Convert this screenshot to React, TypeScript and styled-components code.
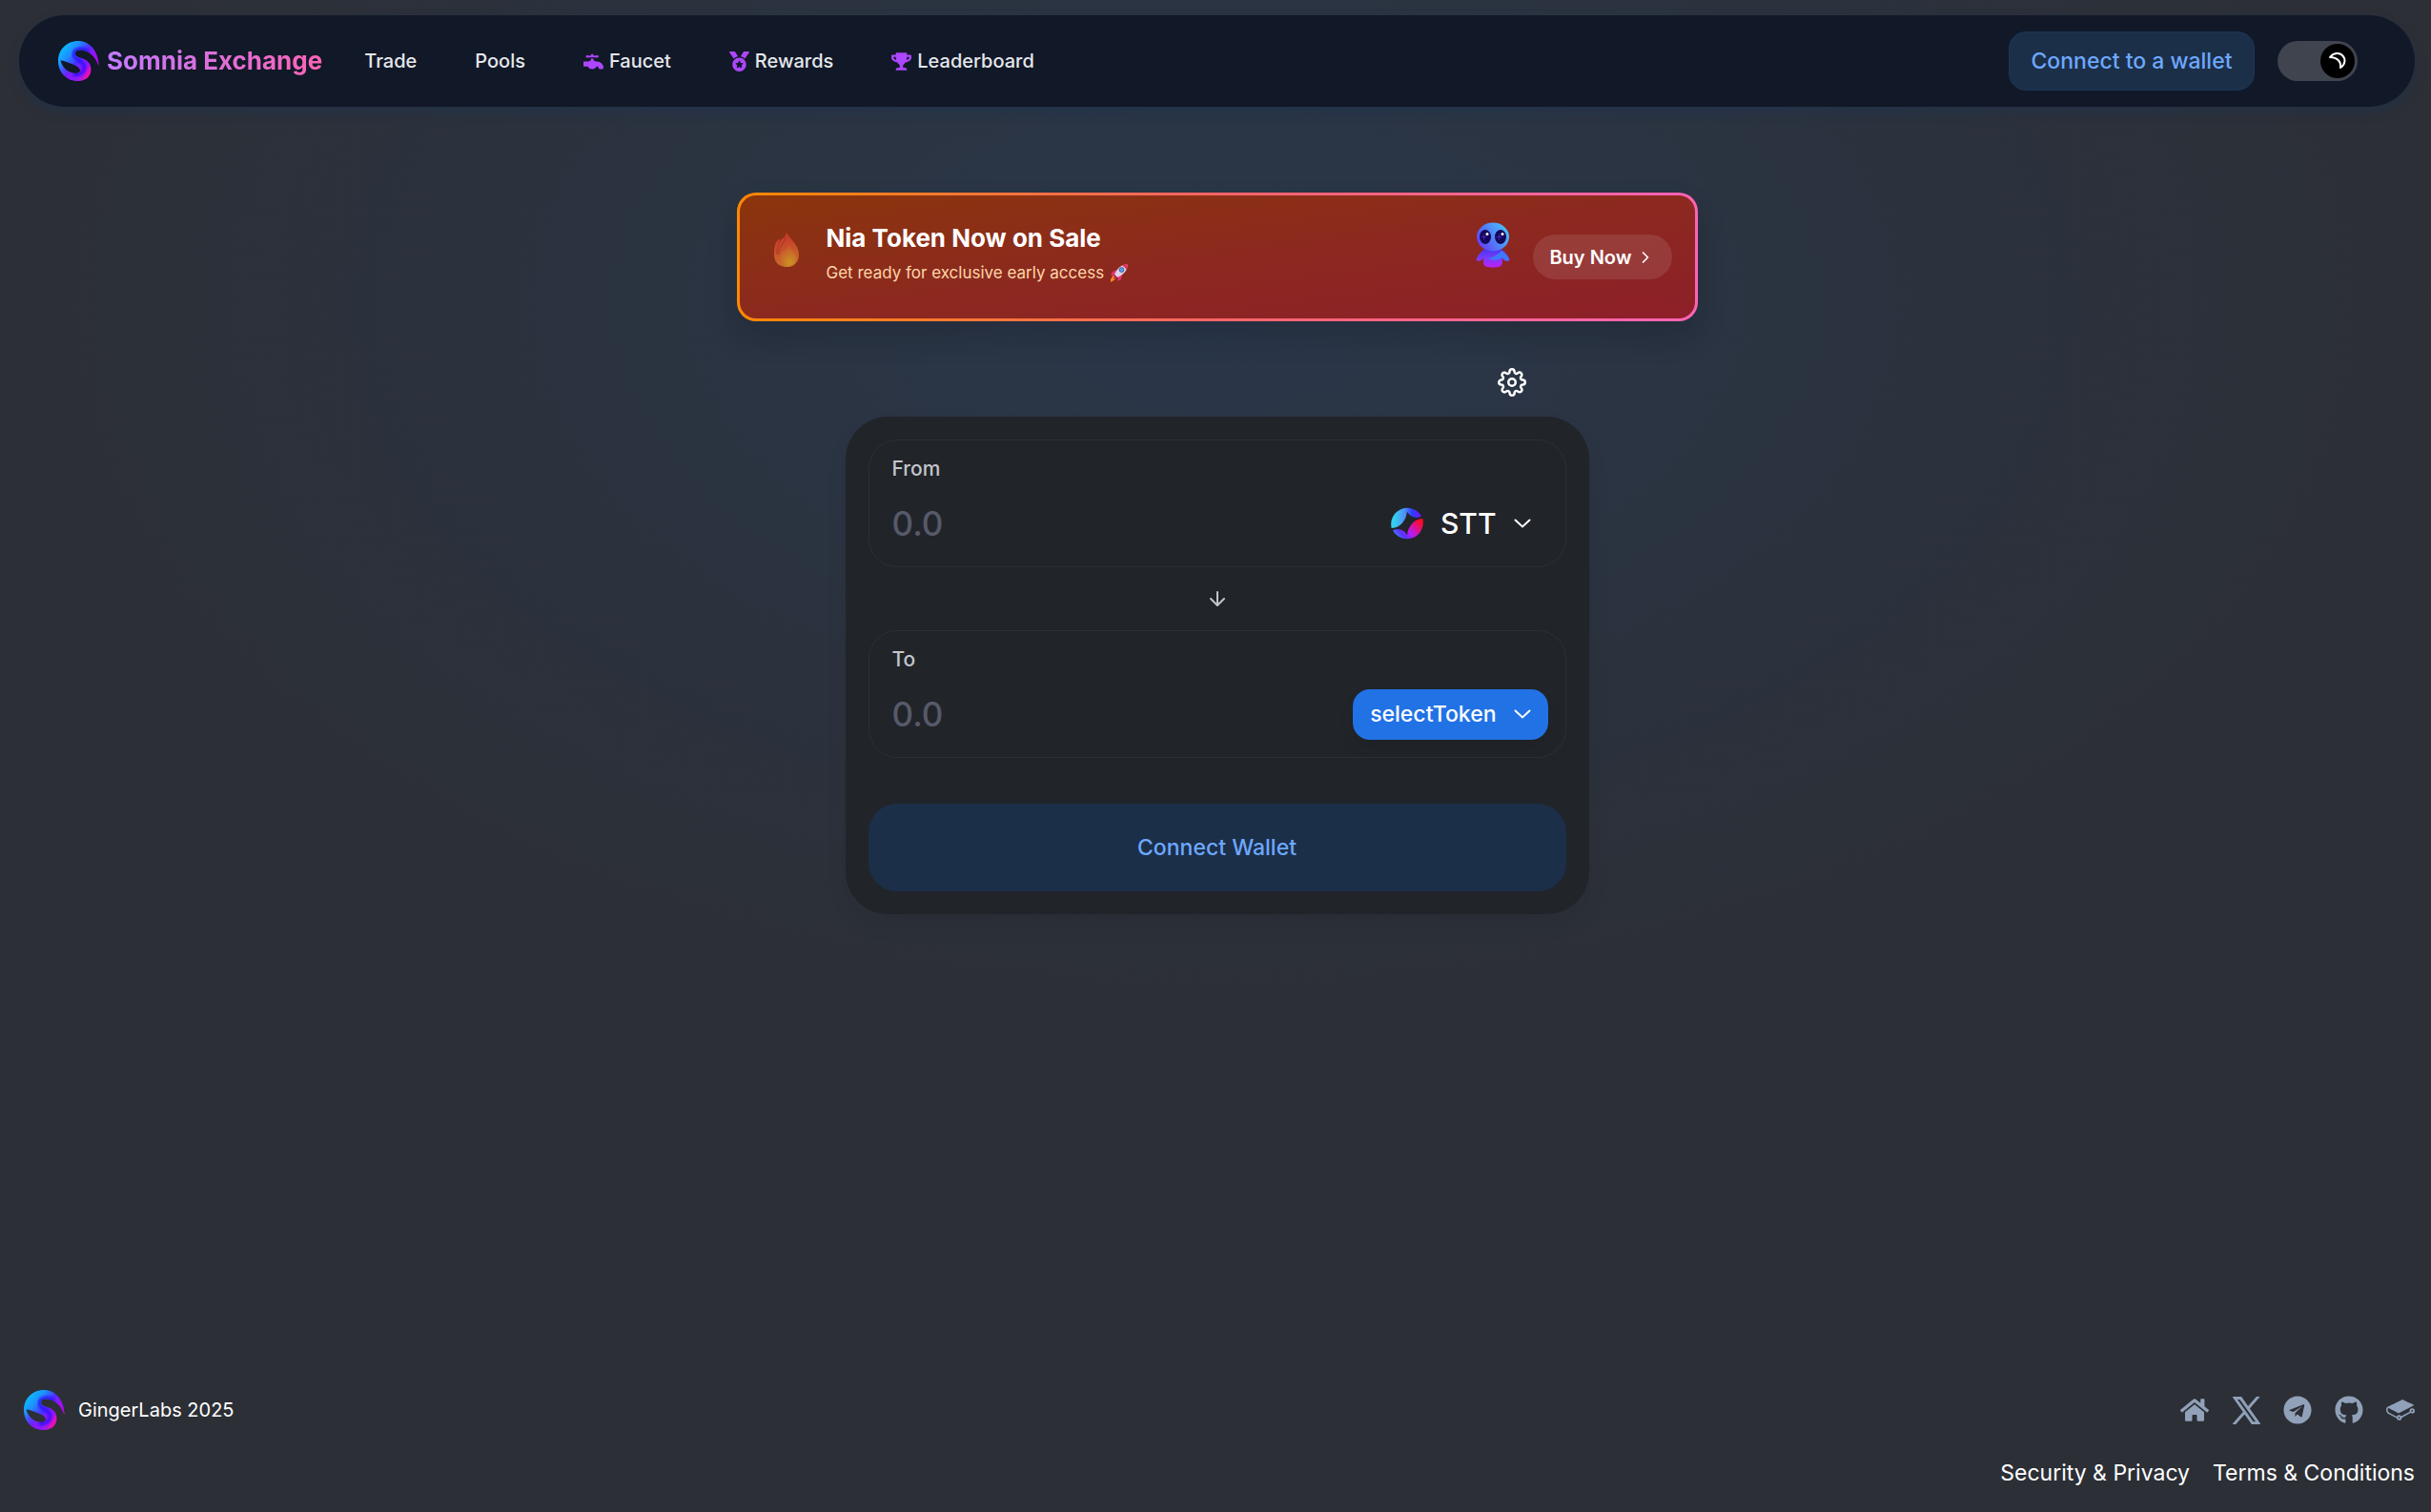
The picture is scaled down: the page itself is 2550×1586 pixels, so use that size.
import React, { useState } from 'react';
import styled, { createGlobalStyle, css } from 'styled-components';
import { FaFaucet, FaGithub, FaHome, FaMedal, FaTelegram, FaTrophy } from 'react-icons/fa';
import { FiSettings } from 'react-icons/fi';
import { ArrowDown, ChevronRight } from 'lucide-react';

const GlobalStyle = createGlobalStyle`
  *, *::before, *::after { box-sizing: border-box; }
  body { margin: 0; background: #2c2f36; color: #fff; font-family: Inter, "Noto Sans", sans-serif; }
  button, input { font-family: inherit; }
`;

const Page = styled.div`
  min-height: 100vh;
  display: flex;
  flex-direction: column;
  padding: 16px 17px 23px 20px;
  background: radial-gradient(50% 48% at 50% 20%, #2a374a 0%, #2c2f36 100%) #2c2f36;
`;

const Nav = styled.nav`
  display: flex;
  align-items: center;
  height: 96px;
  padding: 0 60px 0 40px;
  border-radius: 48px;
  background: #111827;
  box-shadow: 0 6px 12px rgba(25, 50, 85, 0.4);
`;

const Brand = styled.a`
  display: flex;
  align-items: center;
  gap: 8px;
  text-decoration: none;
`;

const BrandName = styled.span`
  font-size: 26px;
  font-weight: 700;
  line-height: 36px;
  background: linear-gradient(90deg, #c27aff, #fb64b6);
  background-clip: text;
  -webkit-background-clip: text;
  color: transparent;
`;

const NavLinks = styled.div`
  display: flex;
  flex: 1;
  gap: 61px;
  padding-left: 44px;
`;

const NavLink = styled.a`
  display: flex;
  align-items: center;
  gap: 6px;
  color: #e5e7eb;
  font-size: 20px;
  font-weight: 500;
  line-height: 28px;
  text-decoration: none;
  svg { color: #ad46ff; }
`;

const blueSoft = css`
  background: #1c2f48;
  color: #6da8ff;
  font-size: 23px;
  font-weight: 500;
  padding: 0;
  cursor: pointer;
`;

const WalletButton = styled.button`
  ${blueSoft}
  width: 258px;
  height: 62px;
  margin-right: 24px;
  border: 1px solid #1b365a;
  border-radius: 18px;
`;

const Toggle = styled.label`
  display: flex;
  justify-content: flex-end;
  width: 84px;
  height: 42px;
  padding: 3px;
  border-radius: 21px;
  background: #40444f;
  cursor: pointer;
  &:has(input:not(:checked)) { justify-content: flex-start; }
`;

const HiddenCheck = styled.input`
  position: absolute;
  opacity: 0;
`;

const Knob = styled.span`
  display: grid;
  place-items: center;
  width: 36px;
  height: 36px;
  border-radius: 50%;
  background: #000;
`;

const Main = styled.main`
  flex: 1;
  display: flex;
  flex-direction: column;
  align-items: center;
  padding-top: 90px;
`;

const Banner = styled.section`
  display: flex;
  align-items: center;
  width: 100%;
  max-width: 1008px;
  height: 135px;
  padding: 0 24px 0 35px;
  border: 3px solid transparent;
  border-radius: 20px;
  background:
    linear-gradient(to bottom right, #8b350c, #8c291f 50%, #8d1f29) padding-box,
    linear-gradient(90deg, #ff8904, #ff6467 50%, #fb64b6) border-box;
  box-shadow: 0 16px 30px rgba(10, 15, 25, 0.2);
`;

const FlameWrap = styled.span`
  display: flex;
  margin-bottom: 16px;
`;

const BannerText = styled.div`
  flex: 1;
  margin: 0 0 8px 28px;
`;

const BannerTitle = styled.h2`
  margin: 0;
  font-size: 26px;
  font-weight: 700;
  line-height: 40px;
`;

const BannerNote = styled.p`
  display: flex;
  align-items: center;
  gap: 6px;
  margin: 0;
  color: #ffd6a8;
  font-size: 17px;
  line-height: 32px;
`;

const MascotWrap = styled.span`
  display: flex;
  margin: 0 24px 26px 0;
`;

const BuyButton = styled.button`
  display: flex;
  align-items: center;
  gap: 4px;
  height: 47px;
  padding: 0 18px 0 17px;
  border: 0;
  border-radius: 24px;
  background: rgba(255, 255, 255, 0.1);
  color: #fff;
  font-size: 20px;
  font-weight: 600;
  cursor: pointer;
`;

const SwapArea = styled.div`
  display: flex;
  flex-direction: column;
  width: 100%;
  max-width: 780px;
`;

const SettingsButton = styled.button`
  display: flex;
  align-self: flex-end;
  margin: 49px 66px 21px 0;
  padding: 0;
  border: 0;
  background: none;
  color: #fff;
  cursor: pointer;
`;

const Card = styled.section`
  display: flex;
  flex-direction: column;
  padding: 24px;
  border-radius: 45px;
  background: #212429;
  box-shadow: 0 12px 24px rgba(0, 0, 0, 0.06);
`;

const Field = styled.div`
  display: flex;
  flex-direction: column;
  height: 134px;
  padding: 18px 18px 18px 24px;
  border: 1px solid #2c2f36;
  border-radius: 30px;
`;

const FieldLabel = styled.label`
  color: #c3c5cb;
  font-size: 21px;
  font-weight: 500;
  line-height: 24px;
`;

const FieldRow = styled.div`
  display: flex;
  align-items: center;
  justify-content: space-between;
  margin-top: 18px;
  height: 54px;
`;

const Amount = styled.input`
  flex: 1;
  min-width: 0;
  padding: 0;
  border: 0;
  outline: 0;
  background: none;
  color: #fff;
  font-size: 35px;
  font-weight: 500;
  &::placeholder { color: #565a69; opacity: 1; }
`;

const TokenButton = styled.button<{ $filled?: boolean }>`
  display: flex;
  align-items: center;
  gap: 18px;
  height: 53px;
  padding: 0 18px;
  border: 0;
  border-radius: 18px;
  background: ${(p) => (p.$filled ? '#2172e5' : 'transparent')};
  box-shadow: ${(p) => (p.$filled ? '0 9px 15px rgba(0, 0, 0, 0.08)' : 'none')};
  color: #fff;
  font-size: ${(p) => (p.$filled ? '23px' : '30px')};
  font-weight: 500;
  cursor: pointer;
`;

const SwapArrow = styled.div`
  display: grid;
  place-items: center;
  height: 66px;
  color: #c3c5cb;
`;

const ConnectButton = styled.button`
  ${blueSoft}
  height: 92px;
  margin-top: 48px;
  border: 0;
  border-radius: 30px;
`;

const Footer = styled.footer`
  display: flex;
  flex-direction: column;
  padding-left: 4px;
`;

const FooterRow = styled.div<{ $end?: boolean }>`
  display: flex;
  align-items: center;
  justify-content: ${(p) => (p.$end ? 'flex-end' : 'space-between')};
  gap: 24px;
  margin-top: ${(p) => (p.$end ? '26px' : '0')};
`;

const Company = styled.div`
  display: flex;
  align-items: center;
  gap: 14px;
  font-size: 20px;
  line-height: 42px;
`;

const Socials = styled.div`
  display: flex;
  gap: 24px;
`;

const SocialLink = styled.a`
  display: grid;
  place-items: center;
  width: 30px;
  height: 30px;
  color: #90a1b9;
`;

const LegalLink = styled.a`
  color: #fff;
  font-size: 23px;
  line-height: 36px;
  text-decoration: none;
`;

const logoShape =
  'M42.500 26C42 10 33 0 21 0 9 0 0 9 0 21s9 21 21 21c8 0 13.500-5 13.500-12 0-6-3.500-9.500-8.500-11.500-4-1.500-8-2-8-5.500 0-3 3-4 7-3.500C33 10.500 39.500 17 42.500 26zM2.500 20.500C6 20.500 10 22.500 14 24c4 1.500 9 3.500 9 7 0 3-4 3.500-8 2.500C9 32 4 27 2.500 20.500z';

function Logo({ id }: { id: string }) {
  return (
    <svg width="44" height="44" viewBox="-1 -1 44 44" aria-hidden="true">
      <defs>
        <linearGradient id={`${id}base`} gradientUnits="userSpaceOnUse" x1="3" y1="12" x2="33" y2="37">
          <stop offset="0" stopColor="#0fb2ff" />
          <stop offset=".22" stopColor="#1f8dff" />
          <stop offset=".5" stopColor="#4a30ff" />
          <stop offset=".72" stopColor="#9a12ff" />
          <stop offset="1" stopColor="#ff10a0" />
        </linearGradient>
        <radialGradient id={`${id}right`} gradientUnits="userSpaceOnUse" cx="42" cy="20" r="22">
          <stop offset="0" stopColor="#b000ff" />
          <stop offset="1" stopColor="#6a2cff" stopOpacity="0" />
        </radialGradient>
        <radialGradient id={`${id}left`} gradientUnits="userSpaceOnUse" cx="12" cy="39" r="18">
          <stop offset="0" stopColor="#9016ff" />
          <stop offset="1" stopColor="#5a30ff" stopOpacity="0" />
        </radialGradient>
        <filter id={`${id}soft`}><feGaussianBlur stdDeviation="1.2" /></filter>
        <clipPath id={`${id}clip`}><path d={logoShape} clipRule="evenodd" /></clipPath>
      </defs>
      <g clipPath={`url(#${id}clip)`}>
        <rect width="43" height="43" fill={`url(#${id}base)`} />
        <rect x="22" width="21" height="27" fill={`url(#${id}right)`} />
        <rect y="21" width="30" height="22" fill={`url(#${id}left)`} />
        <path
          d="M32 11C25 7 17 8 16.500 13.500 16 20 25 20 27 25c2 6-2 11-11 10"
          fill="none"
          stroke="#2d0cff"
          strokeWidth="4"
          opacity=".8"
          filter={`url(#${id}soft)`}
        />
      </g>
    </svg>
  );
}

function Flame() {
  return (
    <svg width="28" height="38" viewBox="0 0 28 38" aria-hidden="true">
      <defs>
        <linearGradient id="flame" x1=".4" y1="0" x2=".6" y2="1">
          <stop offset="0" stopColor="#c5342a" />
          <stop offset=".6" stopColor="#c9592c" />
          <stop offset="1" stopColor="#c96f28" />
        </linearGradient>
        <radialGradient id="flameCore" cx=".65" cy=".8" r=".7">
          <stop offset="0" stopColor="#c99422" />
          <stop offset="1" stopColor="#c95a2c" />
        </radialGradient>
      </defs>
      <path d="M14 1c3 6 13 13 13 23 0 8-5 13-13 13C6 37 1 32 1 24 1 17 2 10 6 8l2 1C10 7 13 5 14 1z" fill="url(#flame)" />
      <path d="M7 9c0 5-4 9-3 15M13 5c-1 8-8 11-7 19" fill="none" stroke="#a73722" />
      <path d="M16 14c3 4 8 8 8 14 0 6-4 9-9 9-6 0-9-4-9-9 0-7 8-7 10-14z" fill="url(#flameCore)" />
    </svg>
  );
}

function Rocket() {
  return (
    <svg width="20" height="20" viewBox="0 0 20 20" aria-hidden="true">
      <path d="M4 12l-3 5v3l5-3z" fill="#f58a1f" />
      <path d="M8 7L3 9l-2 4 5-1zM13 12l-1 5-4 2 1-6z" fill="#e5326e" />
      <path d="M18.500 1.500C13 1 8 5 5 12l3 3c7-3 11-8 10.500-13.500z" fill="#dcd3e8" />
      <path d="M19 1l-6 1 5 5z" fill="#e8345f" />
      <path d="M5 12l3 3-4 2z" fill="#c22563" />
      <circle cx="12.500" cy="7" r="2.400" fill="#4aa3ee" stroke="#5a5a8c" />
    </svg>
  );
}

function Mascot() {
  return (
    <svg width="36" height="48" viewBox="0 0 36 48" aria-hidden="true">
      <defs>
        <linearGradient id="head" x1="0" y1=".8" x2="1" y2=".2">
          <stop offset="0" stopColor="#6a35f5" />
          <stop offset=".5" stopColor="#4f83f8" />
          <stop offset="1" stopColor="#4cc3ff" />
        </linearGradient>
        <linearGradient id="body" x1="0" y1="0" x2="0" y2="1">
          <stop offset="0" stopColor="#4636f0" />
          <stop offset=".5" stopColor="#7a3bfa" />
          <stop offset="1" stopColor="#bd1ff5" />
        </linearGradient>
      </defs>
      <path d="M10 28C5 31 1 36 .5 40c2 1.500 5 1 7.500-2v5c1 4 4 4.500 10 4.500S27 47 28 43v-5c2 3 5 3.500 7.500 2C35 36 31 31 26 28z" fill="url(#body)" />
      <path d="M13 38c5-1 10-4 14-8 4 2 7 6 8.500 10-3 1-6 0-7.500-3-4 3-9 4-15 1z" fill="#3f78fa" />
      <ellipse cx="18" cy="15.500" rx="17" ry="15" fill="url(#head)" />
      <ellipse cx="10" cy="15.500" rx="6" ry="7.500" fill="#14085a" />
      <ellipse cx="26" cy="15.500" rx="6" ry="7.500" fill="#14085a" />
      <path d="M8.500 12.500v6M5.500 15.500h6M24.500 12.500v6M21.500 15.500h6" stroke="#4a1fb8" />
      <circle cx="12" cy="12.500" r="1.500" fill="#fff" />
      <circle cx="28" cy="12.500" r="1.500" fill="#fff" />
    </svg>
  );
}

function SttIcon() {
  return (
    <svg width="34" height="34" viewBox="0 0 34 34" aria-hidden="true">
      <defs>
        <linearGradient id="sttTop" x1="0" y1="0" x2="1" y2="0">
          <stop offset=".1" stopColor="#35d0ee" />
          <stop offset=".45" stopColor="#4f8ff5" />
          <stop offset=".7" stopColor="#2b3cff" />
          <stop offset="1" stopColor="#7a10ff" />
        </linearGradient>
        <linearGradient id="sttBottom" x1="0" y1=".8" x2="1" y2=".2">
          <stop offset="0" stopColor="#3b8cff" />
          <stop offset=".25" stopColor="#5a30ff" />
          <stop offset=".45" stopColor="#b41cff" />
          <stop offset=".95" stopColor="#ff0a28" />
        </linearGradient>
      </defs>
      <path d="M.7 22A17 17 0 0 1 32 9.500C27 12.500 20 10.500 17 4.500 16 14 10 21.500.7 22z" fill="url(#sttTop)" />
      <path d="M33.300 12A17 17 0 0 1 2 24.500C7 21.500 14 23.500 17 29.500 18 20 24 12.500 33.300 12z" fill="url(#sttBottom)" />
    </svg>
  );
}

function Moon() {
  return (
    <svg width="20" height="20" viewBox="0 0 20 20" fill="none" stroke="#fff" strokeWidth="2" strokeLinejoin="round" aria-hidden="true">
      <path d="M2 6C6 1 12 1 15 4c4 4 3 10-2 13 1-6-3-11-11-11z" />
    </svg>
  );
}

function Caret() {
  return (
    <svg width="18" height="11" viewBox="0 0 18 11" fill="none" stroke="currentColor" strokeWidth="2" strokeLinecap="round" aria-hidden="true">
      <path d="M1.500 1.500L9 8.500l7.500-7" />
    </svg>
  );
}

function XLogo() {
  return (
    <svg width="29" height="29" viewBox="-6 -6 312 312" fill="currentColor" stroke="currentColor" strokeWidth="11" aria-hidden="true">
      <path d="M178.570 127.150L290.270 0h-26.460l-97.030 110.380L89.340 0H0l117.130 166.930L0 300.250h26.460l102.400-116.590 81.800 116.590H300L178.570 127.150zM36.010 19.540h40.650l187.130 262.130h-40.660z" />
    </svg>
  );
}

function BookLogo() {
  return (
    <svg width="30" height="30" viewBox="0 0 24 24" fill="currentColor" aria-hidden="true">
      <path d="M10.802 17.770a.703.703 0 1 1-.002 1.406.703.703 0 0 1 .002-1.406m11.024-4.347a.703.703 0 1 1 .001-1.406.703.703 0 0 1-.001 1.406m0-2.876a2.176 2.176 0 0 0-2.174 2.174c0 .233.039.465.115.691l-7.181 3.823a2.165 2.165 0 0 0-1.784-.937c-.829 0-1.584.475-1.950 1.216l-6.451-3.402c-.682-.358-1.192-1.480-1.138-2.502.028-.533.212-.947.493-1.107.178-.1.392-.092.620.027l.042.023c1.710.9 7.304 3.847 7.540 3.956.363.169.565.237 1.185-.057l11.564-6.014c.170-.064.368-.227.368-.474 0-.342-.354-.477-.355-.477-.658-.315-1.669-.788-2.655-1.250-2.108-.987-4.497-2.105-5.546-2.655-.906-.474-1.635-.074-1.765.006l-.252.125C7.780 6.048 1.460 9.178 1.100 9.397.457 9.789.058 10.570.006 11.539c-.080 1.537.703 3.140 1.824 3.727l6.822 3.518a2.175 2.175 0 0 0 2.150 1.862 2.177 2.177 0 0 0 2.173-2.140l7.514-4.073c.380.298.853.461 1.337.461A2.176 2.176 0 0 0 24 12.720a2.176 2.176 0 0 0-2.174-2.174z" />
    </svg>
  );
}

const navItems = [
  { label: 'Trade' },
  { label: 'Pools' },
  { label: 'Faucet', icon: <FaFaucet size={21} /> },
  { label: 'Rewards', icon: <FaMedal size={21} /> },
  { label: 'Leaderboard', icon: <FaTrophy size={21} /> },
];

const socials = [
  { label: 'Home', icon: <FaHome size={30} /> },
  { label: 'X', icon: <XLogo /> },
  { label: 'Telegram', icon: <FaTelegram size={30} /> },
  { label: 'GitHub', icon: <FaGithub size={30} /> },
  { label: 'Docs', icon: <BookLogo /> },
];

export default function App() {
  const [dark, setDark] = useState(true);
  return (
    <>
      <GlobalStyle />
      <Page>
        <Nav>
          <Brand href="#">
            <Logo id="nav" />
            <BrandName>Somnia Exchange</BrandName>
          </Brand>
          <NavLinks>
            {navItems.map((item) => (
              <NavLink key={item.label} href="#">
                {item.icon}
                {item.label}
              </NavLink>
            ))}
          </NavLinks>
          <WalletButton>Connect to a wallet</WalletButton>
          <Toggle>
            <HiddenCheck type="checkbox" aria-label="Dark mode" checked={dark} onChange={() => setDark(!dark)} />
            <Knob><Moon /></Knob>
          </Toggle>
        </Nav>
        <Main>
          <Banner>
            <FlameWrap><Flame /></FlameWrap>
            <BannerText>
              <BannerTitle>Nia Token Now on Sale</BannerTitle>
              <BannerNote>Get ready for exclusive early access <Rocket /></BannerNote>
            </BannerText>
            <MascotWrap><Mascot /></MascotWrap>
            <BuyButton>Buy Now <ChevronRight size={20} /></BuyButton>
          </Banner>
          <SwapArea>
            <SettingsButton aria-label="Settings"><FiSettings size={30} /></SettingsButton>
            <Card>
              <Field>
                <FieldLabel htmlFor="from">From</FieldLabel>
                <FieldRow>
                  <Amount id="from" placeholder="0.0" />
                  <TokenButton><SttIcon />STT<Caret /></TokenButton>
                </FieldRow>
              </Field>
              <SwapArrow><ArrowDown size={24} /></SwapArrow>
              <Field>
                <FieldLabel htmlFor="to">To</FieldLabel>
                <FieldRow>
                  <Amount id="to" placeholder="0.0" />
                  <TokenButton $filled>selectToken<Caret /></TokenButton>
                </FieldRow>
              </Field>
              <ConnectButton>Connect Wallet</ConnectButton>
            </Card>
          </SwapArea>
        </Main>
        <Footer>
          <FooterRow>
            <Company><Logo id="foot" />GingerLabs 2025</Company>
            <Socials>
              {socials.map((s) => (
                <SocialLink key={s.label} href="#" aria-label={s.label}>{s.icon}</SocialLink>
              ))}
            </Socials>
          </FooterRow>
          <FooterRow $end>
            <LegalLink href="#">Security &amp; Privacy</LegalLink>
            <LegalLink href="#">Terms &amp; Conditions</LegalLink>
          </FooterRow>
        </Footer>
      </Page>
    </>
  );
}
